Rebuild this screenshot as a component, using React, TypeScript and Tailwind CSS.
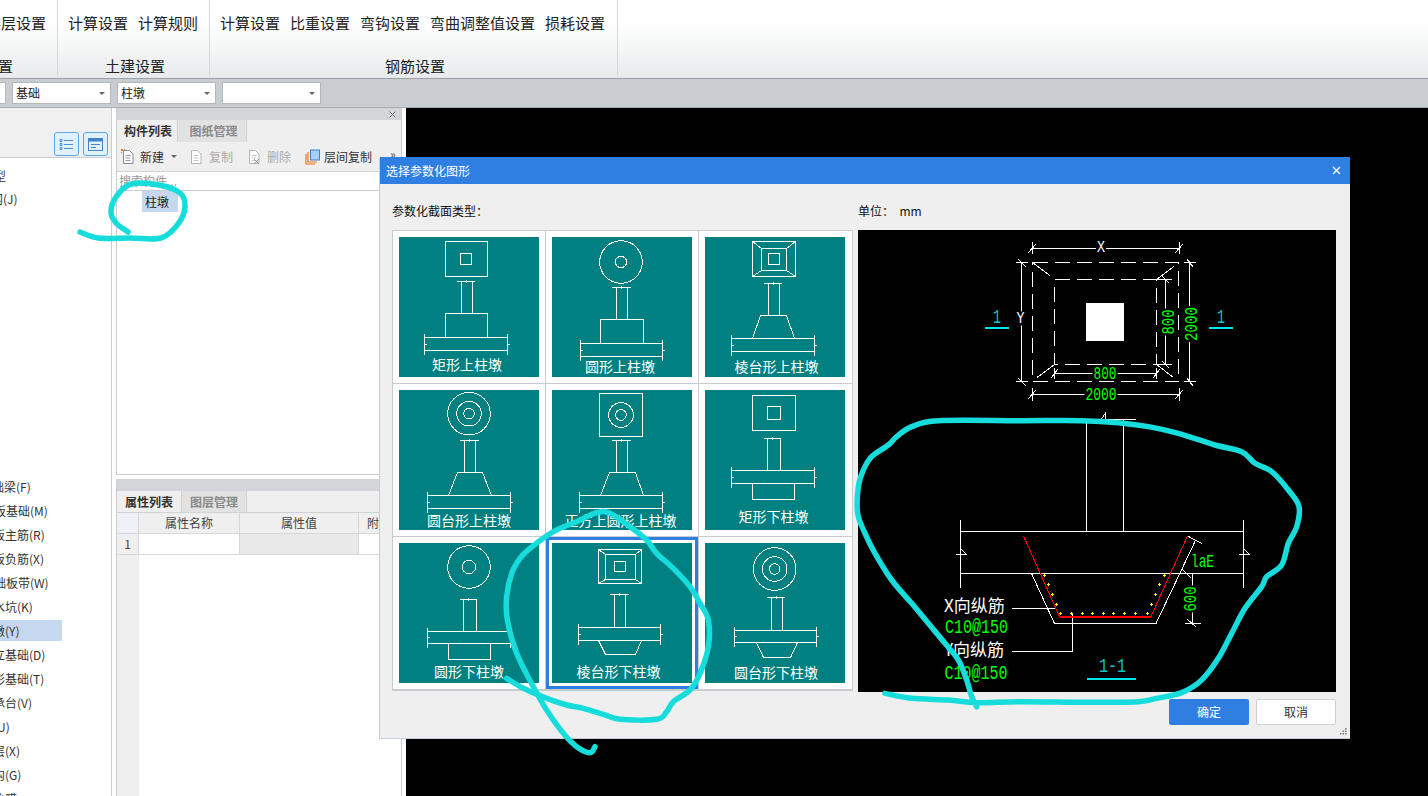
import React from 'react';

type Pt = [number, number];

// catmull-rom through the hand-drawn ink points
const smooth = (pts: Pt[]) => {
  let d = `M${pts[0][0]} ${pts[0][1]}`;
  for (let i = 0; i < pts.length - 1; i++) {
    const p0 = pts[Math.max(i - 1, 0)];
    const p1 = pts[i];
    const p2 = pts[i + 1];
    const p3 = pts[Math.min(i + 2, pts.length - 1)];
    d += `C${p1[0] + (p2[0] - p0[0]) / 6} ${p1[1] + (p2[1] - p0[1]) / 6} ${p2[0] - (p3[0] - p1[0]) / 6} ${p2[1] - (p3[1] - p1[1]) / 6} ${p2[0]} ${p2[1]}`;
  }
  return d;
};

const shift = (pts: Pt[], ox: number, oy: number): Pt[] => pts.map(([x, y]) => [x / 3 + ox, y / 3 + oy]);

const inkLabel: Pt[] = [[80, 232], [98, 238], [130, 238], [161, 238], [178, 224], [185, 207], [180, 193], [159, 185], [131, 184], [116, 197], [111, 212], [116, 223], [128, 232]];
const inkTile = shift(
  [[350, 895], [400, 925], [470, 955], [530, 975], [580, 985], [640, 1003], [690, 1018], [800, 1018], [830, 995], [850, 965], [900, 930], [930, 880], [955, 800], [955, 720], [930, 670], [900, 620], [850, 565], [800, 520], [770, 480], [720, 440], [660, 400], [620, 398], [560, 425], [490, 455], [420, 505], [390, 535], [365, 580], [350, 650], [352, 720], [380, 820], [430, 920], [470, 990], [520, 1060], [560, 1100], [600, 1118], [615, 1100]],
  390,
  380
);
const inkSection = shift(
  [[90, 850], [170, 865], [280, 870], [365, 878], [500, 875], [700, 877], [850, 875], [905, 865], [980, 848], [1040, 810], [1090, 745], [1130, 670], [1170, 595], [1220, 530], [1235, 500], [1280, 465], [1300, 400], [1325, 350], [1332, 290], [1300, 240], [1250, 185], [1200, 160], [1160, 125], [1080, 105], [970, 70], [880, 50], [790, 38], [680, 32], [500, 32], [250, 32], [170, 50], [125, 80], [100, 105], [50, 140], [25, 180], [10, 230], [8, 310], [30, 370], [60, 430], [110, 510], [170, 580], [220, 640], [270, 700], [310, 750], [335, 810], [350, 860], [365, 890]],
  855,
  410
);

const tree = [
  { text: '基础梁(F)', ml: '-ml-[20px]' },
  { text: '筏板基础(M)', ml: '-ml-[18px]' },
  { text: '筏板主筋(R)', ml: '-ml-[19px]' },
  { text: '筏板负筋(X)', ml: '-ml-[19px]' },
  { text: '基础板带(W)', ml: '-ml-[18px]' },
  { text: '集水坑(K)', ml: '-ml-[19px]' },
  { text: '柱墩(Y)', ml: '-ml-[19px]', selected: true },
  { text: '独立基础(D)', ml: '-ml-[19px]' },
  { text: '条形基础(T)', ml: '-ml-[19px]' },
  { text: '桩承台(V)', ml: '-ml-[19px]' },
  { text: '桩(U)', ml: '-ml-[19px]' },
  { text: '垫层(X)', ml: '-ml-[19px]' },
  { text: '地沟(G)', ml: '-ml-[19px]' },
  { text: '砖胎膜', ml: '-ml-[19px]' },
];

const Caret = () => (
  <svg width="6" height="3" viewBox="0 0 6 3" className="shrink-0">
    <path d="M0 0h6L3 3z" fill="#666" />
  </svg>
);

const Select = ({ value, className = '' }: { value?: string; className?: string }) => (
  <div className={`w-[99px] h-[22px] bg-white border border-[#b4b8bd] flex items-center justify-between pl-[3px] pr-[5px] text-[12px] text-[#222] ${className}`}>
    <span>{value}</span>
    <Caret />
  </div>
);

const RibbonGroup = ({ items, label, className, row, labelPad }: { items: string[]; label: string; className: string; row: string; labelPad?: string }) => (
  <div className={`h-[75px] flex flex-col shrink-0 border-r border-[#d4d8da] ${className}`}>
    <div className={`h-[48px] pt-[2px] flex items-center gap-[10px] text-[15px] text-[#222] ${row}`}>
      {items.map((item) => (
        <span key={item} className="whitespace-nowrap">{item}</span>
      ))}
    </div>
    <div className={`mt-[6px] h-[24px] pt-[6px] flex items-center justify-center text-[15px] text-[#222] whitespace-nowrap ${labelPad ?? ''}`}>{label}</div>
  </div>
);

const Tab = ({ text, active, className }: { text: string; active?: boolean; className: string }) => (
  <div className={`h-full flex items-center justify-center text-[12px] font-bold border-r border-[#d0d2d6] ${active ? 'bg-[#efefef] text-[#333]' : 'bg-[#e2e2e2] text-[#8a8a8a]'} ${className}`}>{text}</div>
);

const DocIcon = ({ gray, x }: { gray?: boolean; x?: boolean }) => (
  <svg width="14" height="16" viewBox="0 0 14 16" className="shrink-0">
    <path d="M2.5 1.5h6l3.5 3.5v9.5h-9.5z" fill="#fff" stroke={gray ? '#b5b5b5' : '#8a8a8a'} />
    <path d="M4.5 6.5h5M4.5 9h5M4.5 11.5h5" stroke={gray ? '#c5c5c5' : '#9a9a9a'} />
    {x && <path d="M7 10l5 5M12 10l-5 5" stroke="#999" />}
    {!gray && <path d="M0 0h2v2H0zM3 0h1v1H3zM0 3h1v1H0z" fill="#e8791a" />}
  </svg>
);

// ---- parametric tiles -----------------------------------------------------

type TileDef = {
  label: string;
  lx: number;
  ly: number;
  plan: React.ReactNode;
  tick: [number, number, number];
  col: [number, number, number];
  slab: [number, number, number, number];
  body: string;
};

const Rect = ({ x0, x1, y0, y1 }: { x0: number; x1: number; y0: number; y1: number }) => (
  <rect x={x0} y={y0} width={x1 - x0} height={y1 - y0} fill="none" stroke="#fff" />
);
const Circles = ({ cx, cy, rs }: { cx: number; cy: number; rs: number[] }) => (
  <>
    {rs.map((r) => (
      <circle key={r} cx={cx} cy={cy} r={r} fill="none" stroke="#fff" />
    ))}
  </>
);
const Frustum = ({ o, m, i, y }: { o: number[]; m: number[]; i: number[]; y: number[] }) => (
  <>
    <Rect x0={o[0]} x1={o[1]} y0={y[0]} y1={y[1]} />
    <Rect x0={m[0]} x1={m[1]} y0={y[2]} y1={y[3]} />
    <Rect x0={i[0]} x1={i[1]} y0={y[4]} y1={y[5]} />
    <path d={`M${o[0]} ${y[0]}L${m[0]} ${y[2]}M${o[1]} ${y[0]}L${m[1]} ${y[2]}M${o[0]} ${y[1]}L${m[0]} ${y[3]}M${o[1]} ${y[1]}L${m[1]} ${y[3]}`} stroke="#fff" fill="none" />
  </>
);

const tiles: TileDef[] = [
  {
    label: '矩形上柱墩', lx: 68, ly: 128,
    plan: (<><Rect x0={46.5} x1={88.5} y0={4.5} y1={39.5} /><Rect x0={61.5} x1={72.5} y0={16.5} y1={27.5} /></>),
    tick: [58, 76, 44.5], col: [62.5, 73.5, 76.5], slab: [25.5, 108.5, 100.5, 113.5], body: '46.5,100.5 46.5,76.5 88.5,76.5 88.5,100.5',
  },
  {
    label: '圆形上柱墩', lx: 68, ly: 130,
    plan: <Circles cx={69} cy={25} rs={[21.3, 5.7]} />,
    tick: [60, 79, 50.5], col: [64.5, 75.5, 82.5], slab: [28.5, 110.5, 106.5, 119.5], body: '48.5,106.5 48.5,82.5 91.5,82.5 91.5,106.5',
  },
  {
    label: '棱台形上柱墩', lx: 71.5, ly: 130,
    plan: <Frustum o={[47.5, 90.5]} m={[56.5, 81.5]} i={[63.5, 74.5]} y={[4.5, 39.5, 11.5, 33.5, 16.5, 27.5]} />,
    tick: [59, 77, 46.5], col: [63.5, 74.5, 78.5], slab: [26.5, 109.5, 101.5, 114.5], body: '47.5,101.5 55.5,78.5 81.5,78.5 89.5,101.5',
  },
  {
    label: '圆台形上柱墩', lx: 70, ly: 130.5,
    plan: <Circles cx={70} cy={23.7} rs={[21.3, 12.3, 5.3]} />,
    tick: [61, 80, 50.5], col: [65.5, 76.5, 82.5], slab: [28.5, 111.5, 105.5, 118.5], body: '49.5,105.5 58.5,82.5 83.5,82.5 92.5,105.5',
  },
  {
    label: '正方上圆形上柱墩', lx: 68.5, ly: 130.5,
    plan: (<><Rect x0={47.5} x1={90.5} y0={3.5} y1={46.5} /><Circles cx={69} cy={25} rs={[12.3, 5.3]} /></>),
    tick: [60, 79, 50.5], col: [64.5, 75.5, 82.5], slab: [27.5, 110.5, 105.5, 118.5], body: '48.5,105.5 57.5,82.5 83.5,82.5 91.5,105.5',
  },
  {
    label: '矩形下柱墩', lx: 68.5, ly: 126.5,
    plan: (<><Rect x0={47.5} x1={90.5} y0={5.5} y1={40.5} /><Rect x0={62.5} x1={75.5} y0={16.5} y1={29.5} /></>),
    tick: [59, 76, 48.5], col: [62.5, 75.5, 80.5], slab: [26.5, 109.5, 80.5, 93.5], body: '47.5,93.5 47.5,109.5 89.5,109.5 89.5,93.5',
  },
  {
    label: '圆形下柱墩', lx: 70, ly: 128.5,
    plan: <Circles cx={70} cy={24} rs={[21.3, 6.7]} />,
    tick: [61, 78, 56.5], col: [64.5, 77.5, 88.5], slab: [28.5, 111.5, 88.5, 100.5], body: '49.5,100.5 49.5,116.5 91.5,116.5 91.5,100.5',
  },
  {
    label: '棱台形下柱墩', lx: 66.5, ly: 128.5,
    plan: <Frustum o={[46.5, 89.5]} m={[53.5, 83.5]} i={[62.5, 73.5]} y={[6.5, 40.5, 11.5, 36.5, 18.5, 28.5]} />,
    tick: [58, 77, 51.5], col: [62.5, 73.5, 84.5], slab: [26.5, 108.5, 84.5, 97.5], body: '46.5,97.5 53.5,111.5 83.5,111.5 89.5,97.5',
  },
  {
    label: '圆台形下柱墩', lx: 71, ly: 129.5,
    plan: <Circles cx={69.7} cy={26} rs={[21.3, 12.3, 5.3]} />,
    tick: [62, 80, 54.5], col: [66.5, 77.5, 87.5], slab: [29.5, 111.5, 87.5, 99.5], body: '51.5,99.5 58.5,114.5 85.5,114.5 92.5,99.5',
  },
];

const TileArt = ({ t }: { t: TileDef }) => {
  const [sx0, sx1, sy0, sy1] = t.slab;
  const mid = (sy0 + sy1) / 2;
  return (
    <svg width="140" height="140" viewBox="0 0 140 140" className="block bg-[#008080]">
      <g shapeRendering="crispEdges">
        {t.plan}
        <path d={`M${t.tick[0]} ${t.tick[2]}H${t.tick[1]}M${(t.tick[0] + t.tick[1]) / 2} ${t.tick[2] - 2}v3`} stroke="#fff" fill="none" />
        <path d={`M${t.col[0]} ${t.tick[2]}V${t.col[2]}M${t.col[1]} ${t.tick[2]}V${t.col[2]}`} stroke="#fff" fill="none" />
        <polyline points={t.body} stroke="#fff" fill="none" />
        <rect x={sx0} y={sy0} width={sx1 - sx0} height={sy1 - sy0} fill="none" stroke="#fff" />
        <path d={`M${sx0} ${sy0 - 4}V${sy1 + 4}M${sx1} ${sy0 - 4}V${sy1 + 4}M${sx0 - 1} ${mid}h3M${sx1 - 1} ${mid}h3`} stroke="#fff" fill="none" />
      </g>
      <text x={t.lx} y={t.ly + 5} textAnchor="middle" fontSize="14" fill="#fff">{t.label}</text>
    </svg>
  );
};

// ---- section preview --------------------------------------------------------

const whiteLines =
  'M174.5 18.5H321.5M174.5 12V24M321.5 12V24M170 23L178 14M317 23L325 14' + // X dim
  'M163.5 32.5V151.5M158 32.5H170M158 151.5H170M160 29L168 37M160 148L168 156' + // Y dim
  'M331.5 32.5V151.5M326 32.5H338M326 151.5H338M329 29L335 37M329 148L335 156' + // right dim
  'M307.5 49.5V134.5M298 49.5H314M298 134.5H314M304 46L311 53M304 131L311 138' + // 800 vertical
  'M196.5 143.5H298.5M196.5 138V149M298.5 138V149M193 148L200 139M295 148L302 139' + // 800 horizontal
  'M174.5 164.5H321.5M174.5 158V171M321.5 158V171M170 169L178 160M317 169L325 160' + // 2000 horizontal
  'M174.5 32.5L192 45.5M316 36.5L298.5 49.5M196.5 134.5L179 147.5M298.5 134.5L315.5 147.5';

const sectionLines =
  'M228.5 190V301.5M265.5 190V301.5M240.5 189.5H278M243 189.5L247 184V189' + // column
  'M102.5 301.5H385.5M102.5 343.5H385.5M102.5 290V357.5M385.5 290V357.5' + // slab
  'M98 324H108L103 319M381 324H391L386 319' + // break marks
  'M173.5 343.5L196.5 393.5H298L337 311.5M329.5 306L344 313.5' + // trapezoid
  'M334.5 343.5V393.5M327 393.5H343M329 389L338 397M322 343.5H335M324 339L333 348' + // 600 dim
  'M154 378.5H197M154 421.5H214.5V383.5';

const dots: Pt[] = [[568, 496], [580, 524], [592, 553], [604, 583], [616, 610], [649, 610], [682, 610], [712, 610], [745, 610], [775, 610], [808, 610], [841, 610], [877, 610], [889, 583], [901, 553], [913, 524], [928, 496]];

const Cad = ({ x, y, len, size = 19, fill = '#00ff00', rotate, children }: { x: number; y: number; len: number; size?: number; fill?: string; rotate?: boolean; children: string }) => (
  <>
    {/* knock the dimension line out behind the figure */}
    <rect
      x={rotate ? x - 7 : x - len / 2 - 1}
      y={rotate ? y - len / 2 - 1 : y - 7}
      width={rotate ? 14 : len + 2}
      height={rotate ? len + 2 : 14}
      fill="#000"
    />
    <text
      x={x}
      y={y}
      fill={fill}
      fontSize={size}
      textAnchor="middle"
      dominantBaseline="central"
      textLength={len}
      lengthAdjust="spacingAndGlyphs"
      transform={rotate ? `rotate(-90 ${x} ${y})` : undefined}
      className="font-['Liberation_Mono',monospace]"
    >
      {children}
    </text>
  </>
);

const SectionPreview = () => (
  <svg width="478" height="462" viewBox="0 0 478 462" className="block bg-black">
    <g shapeRendering="crispEdges" fill="none">
      <path d={whiteLines} stroke="#fff" />
      <rect x="174.5" y="32.5" width="146" height="119" stroke="#fff" strokeDasharray="15 7" />
      <rect x="196.5" y="49.5" width="102" height="85" stroke="#fff" strokeDasharray="15 7" />
      <rect x="228" y="73" width="38" height="38" fill="#fff" />
      <path d="M127 98H151M351 98H375M229 448.5H278" stroke="#00e5ee" strokeWidth="2" />
      <path d={sectionLines} stroke="#fff" />
      <path d="M165.5 306L201.5 386.5H293L329.5 306" stroke="#ff0000" />
      <path d="M201.5 386.5H293" stroke="#ff0000" strokeWidth="2" />
      {dots.map(([x, y]) => (
        <path key={`${x}-${y}`} d={`M${x / 3 - 4.5} ${y / 3 + 180}h3M${x / 3 - 3} ${y / 3 + 178.5}v3`} stroke="#ffff00" />
      ))}
    </g>
    <Cad x={243} y={18} len={8} size={16} fill="#fff">X</Cad>
    <Cad x={162.5} y={88.5} len={8} size={16} fill="#fff">Y</Cad>
    <Cad x={139} y={87} len={8} size={20} fill="#00c8c8">1</Cad>
    <Cad x={363} y={87} len={8} size={20} fill="#00c8c8">1</Cad>
    <Cad x={334} y={94} len={34} rotate>2000</Cad>
    <Cad x={310.5} y={92} len={25} rotate>800</Cad>
    <Cad x={247} y={143.5} len={23}>800</Cad>
    <Cad x={243} y={165} len={31}>2000</Cad>
    <Cad x={344.5} y={332} len={23} size={18}>laE</Cad>
    <Cad x={333} y={369} len={25} rotate>600</Cad>
    <Cad x={254.5} y={436.5} len={27} size={20} fill="#00c8c8">1-1</Cad>
    <text x={86} y={382} fontSize="17" fill="#fff">X向纵筋</text>
    <Cad x={118.5} y={397} len={63} size={20}>C10@150</Cad>
    <text x={86} y={426} fontSize="17" fill="#fff">Y向纵筋</text>
    <Cad x={118} y={443} len={63} size={20}>C10@150</Cad>
  </svg>
);

// ---- dialog -------------------------------------------------------------------

const ParamDialog = () => (
  <div className="absolute left-[379px] top-[157px] w-[971px] h-[582px] bg-[#efefef] border-l border-b border-[#c5cdd8] flex flex-col">
    <div className="h-[27px] bg-[#2f7fe3] text-white text-[12px] flex items-center justify-between pl-[6px] pr-[9px] shrink-0">
      <span>选择参数化图形</span>
      <svg width="9" height="9" viewBox="0 0 9 9">
        <path d="M1 1l7 7M8 1l-7 7" stroke="#fff" strokeWidth="1.4" />
      </svg>
    </div>
    <div className="flex gap-[5px] pl-[12px] flex-1 min-h-0">
      <div className="w-[461px] flex flex-col">
        <div className="h-[46px] flex items-end pb-[10px] text-[12px] text-[#111]">参数化截面类型：</div>
        <div className="w-[461px] h-[461px] bg-white border border-[#c8cbd0] grid grid-cols-[153px_153px_153px] grid-rows-[153px_153px_153px]">
          {tiles.map((t, i) => (
            <div key={t.label} className={`relative pl-[6px] pt-[6px] border-b border-[#c8cbd0] ${i % 3 < 2 ? 'border-r' : ''}`}>
              <TileArt t={t} />
              {i === 7 && <div className="absolute left-0 top-0 w-[152px] h-[152px] border-[3px] border-[#2f7fe3]" />}
            </div>
          ))}
        </div>
      </div>
      <div className="w-[478px] flex flex-col">
        <div className="h-[46px] flex items-end pb-[10px] text-[12px] text-[#111] whitespace-pre">单位：  mm</div>
        <SectionPreview />
        <div className="flex justify-end gap-[7px] mt-[7px]">
          <button className="w-[80px] h-[26px] rounded-[2px] bg-[#2f7fe3] text-white text-[12px]">确定</button>
          <button className="w-[80px] h-[26px] rounded-[2px] bg-white border border-[#ccd0d6] text-[#333] text-[12px]">取消</button>
        </div>
      </div>
    </div>
    <svg width="8" height="8" viewBox="0 0 8 8" className="absolute right-[3px] bottom-[3px]">
      <path d="M6 1h1.5v1.5H6zM3.5 3.5H5V5H3.5zM6 3.5h1.5V5H6zM1 6h1.5v1.5H1zM3.5 6H5v1.5H3.5zM6 6h1.5v1.5H6z" fill="#777" />
    </svg>
  </div>
);

export default function App() {
  return (
    <div className="relative w-[1428px] h-[796px] overflow-hidden flex flex-col bg-white font-['Noto_Sans_CJK_SC',sans-serif]">
      {/* ribbon */}
      <div className="h-[79px] shrink-0 flex bg-gradient-to-b from-white from-30% to-[#e7eaeb] border-b border-[#9da1a5] overflow-hidden">
        <RibbonGroup className="-ml-[91px] w-[149px]" row="justify-end pr-[11px]" items={['楼层设置']} label="工程设置" />
        <RibbonGroup className="w-[152px]" row="pl-[10px]" items={['计算设置', '计算规则']} label="土建设置" labelPad="pl-[3px]" />
        <RibbonGroup className="w-[408px]" row="pl-[10px]" items={['计算设置', '比重设置', '弯钩设置', '弯曲调整值设置', '损耗设置']} label="钢筋设置" labelPad="pl-[3px]" />
      </div>

      {/* selector bar */}
      <div className="h-[29px] shrink-0 flex items-center gap-[6px] bg-[#c9cdd2] border-b border-[#a8acb0]">
        <Select className="-ml-[93px]" />
        <Select value="基础" />
        <Select value="柱墩" />
        <Select />
      </div>

      <div className="flex flex-1 min-h-0">
        {/* component tree, scrolled sideways */}
        <div className="w-[112px] shrink-0 border-r border-[#c9cdd2] flex flex-col overflow-hidden">
          <div className="h-[50px] shrink-0 bg-[#f0f0f0] border-b border-[#c9cdd2] flex items-start justify-end gap-[4px] pt-[24px] pr-[3px]">
            <div className="w-[25px] h-[24px] rounded-[3px] border border-[#5aa7e8] bg-[#e1f0fd] flex items-center justify-center">
              <svg width="15" height="13" viewBox="0 0 15 13" fill="none" stroke="#4a90d9">
                <path d="M1 1.5h2v2H1zM1 5.5h2v2H1zM1 9.5h2v2H1zM5 2.5h9M5 6.5h9M5 10.5h9" />
              </svg>
            </div>
            <div className="w-[25px] h-[24px] rounded-[3px] border border-[#5aa7e8] bg-[#e1f0fd] flex items-center justify-center">
              <svg width="15" height="13" viewBox="0 0 15 13" fill="none">
                <rect x="0.5" y="0.5" width="14" height="12" stroke="#3f84cc" />
                <rect x="1" y="1" width="13" height="2.5" fill="#3f84cc" />
                <path d="M3 6.5h9M3 9.5h5" stroke="#3f84cc" />
              </svg>
            </div>
          </div>
          <div className="pt-[5px] flex-1 text-[12px] text-[#333] whitespace-nowrap">
            <div className="h-6 flex items-center"><span className="-ml-[42px] pt-[2px]">常用类型</span></div>
            <div className="h-6 flex items-center"><span className="-ml-[21px]">轴网(J)</span></div>
            <div className="h-[263px]" />
            {tree.map((row) => (
              <div key={row.text} className="h-6 flex items-center">
                <div className={`h-[21px] w-[62px] flex items-center ${row.selected ? 'bg-[#c6d8f0]' : ''}`}>
                  <span className={`pt-[2px] ${row.ml}`}>{row.text}</span>
                </div>
              </div>
            ))}
          </div>
        </div>

        <div className="w-[4px] shrink-0" />

        {/* list + property panels */}
        <div className="w-[286px] shrink-0 flex flex-col">
          <div className="h-[367px] shrink-0 flex flex-col border-x border-b border-[#c9cdd2]">
            <div className="h-[12px] shrink-0 bg-[#d3d5d9] flex items-center justify-end pr-[5px]">
              <svg width="7" height="7" viewBox="0 0 7 7"><path d="M.5.5l6 6M6.5.5l-6 6" stroke="#777" /></svg>
            </div>
            <div className="h-[22px] shrink-0 flex bg-[#efefef]">
              <Tab text="构件列表" active className="w-[61px] pl-[2px]" />
              <Tab text="图纸管理" className="w-[69px] pl-[3px]" />
            </div>
            <div className="h-[30px] shrink-0 flex items-center bg-[#efefef] border-b border-[#d0d2d6] pl-[4px] text-[12px] text-[#333]">
              <DocIcon />
              <span className="ml-[5px]">新建</span>
              <span className="ml-[7px]"><Caret /></span>
              <span className="ml-[12px]"><DocIcon gray /></span>
              <span className="ml-[6px] text-[#aaa]">复制</span>
              <span className="ml-[14px]"><DocIcon gray x /></span>
              <span className="ml-[6px] text-[#aaa]">删除</span>
              <svg width="16" height="16" viewBox="0 0 16 16" className="ml-[14px] shrink-0">
                <path d="M1 5v10h9" fill="none" stroke="#e8791a" strokeWidth="1.2" />
                <path d="M3 3v10h9" fill="none" stroke="#e8791a" strokeWidth="1.2" />
                <rect x="5.5" y="1" width="9" height="10" fill="#a9cdf3" stroke="#3f84cc" />
              </svg>
              <span className="ml-[3px]">层间复制</span>
              <span className="ml-[18px] mb-[6px] text-[#555] leading-none">»</span>
            </div>
            <div className="h-[19px] shrink-0 flex items-center border-b border-[#c9cdd2] pl-[2px] text-[12px] text-[#999]">搜索构件...</div>
            <div className="flex-1 bg-white text-[12px] text-[#222]">
              <div className="ml-[25px] w-[36px] h-[21px] bg-[#c6d8f0] flex items-center pl-[3px]">柱墩</div>
            </div>
          </div>

          <div className="h-[4px] shrink-0" />

          <div className="flex-1 min-h-0 flex flex-col border-x border-[#c9cdd2]">
            <div className="h-[12px] shrink-0 bg-[#d3d5d9]" />
            <div className="h-[22px] shrink-0 flex bg-[#efefef] border-b border-[#d0d2d6]">
              <Tab text="属性列表" active className="w-[65px]" />
              <Tab text="图层管理" className="w-[65px]" />
            </div>
            <div className="h-[21px] shrink-0 flex bg-[#efefef] border-b border-[#d8d8d8] text-[12px] text-[#444]">
              <div className="w-[22px] bg-[#edf1f6] border-r border-[#d8d8d8]" />
              <div className="w-[101px] border-r border-[#d8d8d8] flex items-center justify-center">属性名称</div>
              <div className="w-[119px] border-r border-[#d8d8d8] flex items-center justify-center">属性值</div>
              <div className="pl-[8px] flex items-center">附加</div>
            </div>
            <div className="h-[21px] shrink-0 flex border-b border-[#d8d8d8] text-[12px] text-[#444]">
              <div className="w-[22px] bg-[#efefef] border-r border-[#d8d8d8] flex items-center justify-center">1</div>
              <div className="w-[101px] border-r border-[#d8d8d8]" />
              <div className="w-[119px] bg-[#e9e9e9] border-r border-[#d8d8d8]" />
            </div>
            <div className="flex-1 flex">
              <div className="w-[22px] bg-[#efefef]" />
            </div>
          </div>
        </div>

        <div className="w-[4px] shrink-0" />
        <div className="flex-1 bg-black" />
      </div>

      <ParamDialog />

      {/* marker ink on top of the screenshot */}
      <svg width="1428" height="796" viewBox="0 0 1428 796" className="absolute inset-0 pointer-events-none" fill="none" stroke="#17dcdc" strokeWidth="5.5" strokeLinecap="round" strokeLinejoin="round">
        <path d={smooth(inkLabel)} />
        <path d={smooth(inkTile)} />
        <path d={smooth(inkSection)} />
      </svg>
    </div>
  );
}
